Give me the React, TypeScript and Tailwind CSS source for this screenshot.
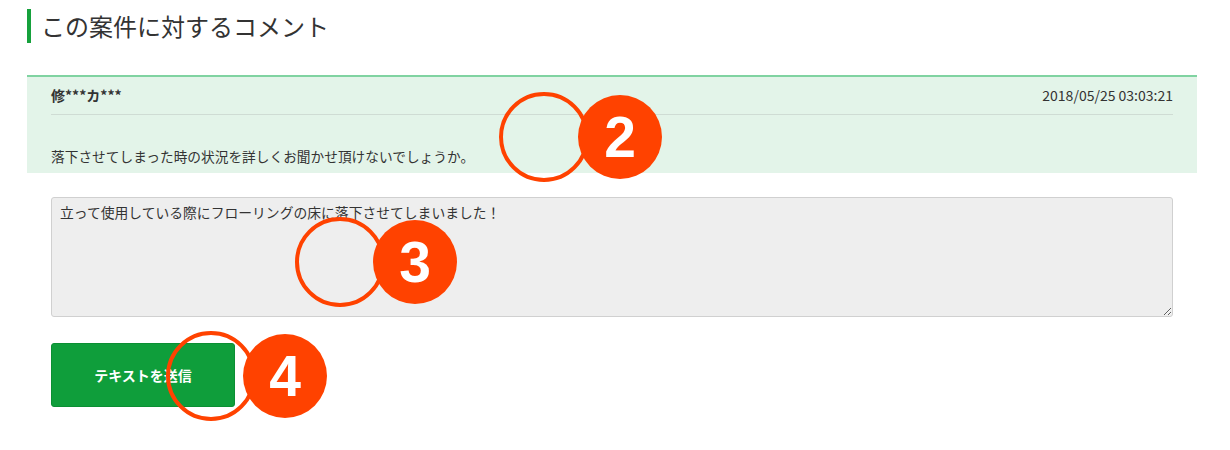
const jp = "font-['Noto_Sans_CJK_JP',sans-serif]";

const Marker = ({
  n,
  ringLeft,
  ringTop,
  dotLeft,
  dotTop,
}: {
  n: number;
  ringLeft: string;
  ringTop: string;
  dotLeft: string;
  dotTop: string;
}) => (
  <>
    <div
      className={`absolute h-[90px] w-[90px] rounded-full border-4 border-[#ff4200] ${ringLeft} ${ringTop}`}
    />
    <div
      className={`absolute flex h-[84px] w-[84px] items-center justify-center rounded-full bg-[#ff4200] ${dotLeft} ${dotTop}`}
    >
      <span className="font-['Liberation_Sans',Arial,sans-serif] text-[57px] font-bold leading-none text-white">
        {n}
      </span>
    </div>
  </>
);

export default function App() {
  return (
    <div className={`relative min-h-[450px] w-full bg-white pl-[27px] pr-[33px] pt-[9px] ${jp}`}>
      <h2 className="flex h-[34px] items-center border-l-4 border-[#16a13c] pl-[10px] text-[24px] leading-none text-[#333]">
        この案件に対するコメント
      </h2>

      <div className="mt-[32px] border-t-2 border-[#80d3a1] bg-[#e3f4e9] px-6 pb-[7px]">
        <div className="flex h-[38px] items-center justify-between border-b border-[#cfdcd4] text-[14px] text-[#333]">
          <span className="font-bold">修***カ***</span>
          <span>2018/05/25 03:03:21</span>
        </div>
        <p className="pt-[31px] text-[13.7px] leading-[20px] text-[#333]">
          落下させてしまった時の状況を詳しくお聞かせ頂けないでしょうか。
        </p>
      </div>

      <div className="px-6">
        <textarea
          className={`mt-6 block h-[120px] w-full resize-y rounded-[3px] border border-[#d0d0d0] bg-[#eeeeee] px-2 pt-[4px] text-[13.8px] leading-[20px] text-[#333] outline-none ${jp}`}
          defaultValue="立って使用している際にフローリングの床に落下させてしまいました！"
        />
        <button
          type="button"
          className="mt-[26px] flex h-[64px] w-[184px] items-center justify-center rounded-[3px] border border-[#0b8f33] bg-[#0f9e3b] text-[14px] font-bold text-white"
        >
          テキストを送信
        </button>
      </div>

      <Marker n={2} ringLeft="left-[499px]" ringTop="top-[92px]" dotLeft="left-[578px]" dotTop="top-[95px]" />
      <Marker n={3} ringLeft="left-[295px]" ringTop="top-[217px]" dotLeft="left-[373px]" dotTop="top-[220px]" />
      <Marker n={4} ringLeft="left-[166px]" ringTop="top-[331px]" dotLeft="left-[243px]" dotTop="top-[334px]" />
    </div>
  );
}
